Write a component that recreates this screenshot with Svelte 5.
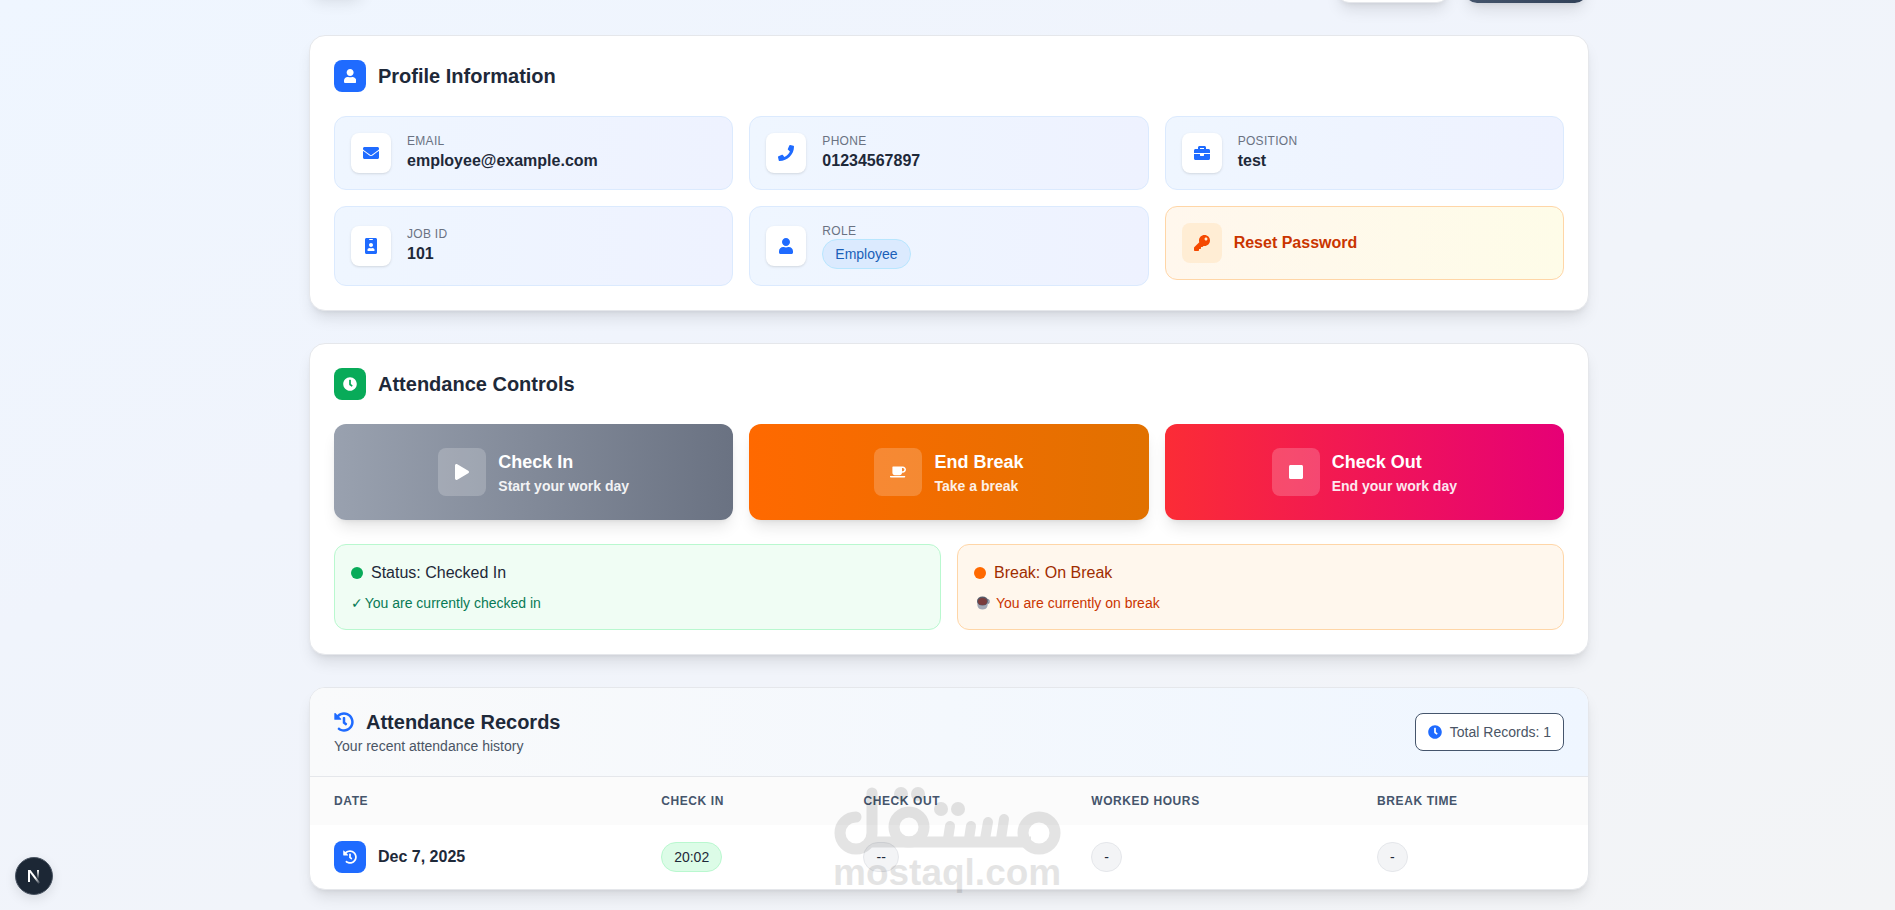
<script>
  const icons = {
    user: ['0 0 448 512', 'M224 256c70.7 0 128-57.3 128-128S294.7 0 224 0 96 57.3 96 128s57.3 128 128 128zm89.6 32h-16.7c-22.2 10.2-46.9 16-72.9 16s-50.6-5.8-72.9-16h-16.7C60.2 288 0 348.2 0 422.4V464c0 26.5 21.5 48 48 48h352c26.5 0 48-21.5 48-48v-41.6c0-74.2-60.2-134.4-134.4-134.4z'],
    envelope: ['0 0 512 512', 'M502.3 190.8c3.9-3.1 9.7-.2 9.7 4.7V400c0 26.5-21.5 48-48 48H48c-26.5 0-48-21.5-48-48V195.6c0-5 5.7-7.8 9.7-4.7 22.4 17.4 52.1 39.5 154.1 113.6 21.1 15.4 56.7 47.8 92.2 47.6 35.7.3 72-32.8 92.3-47.6 102-74.1 131.6-96.3 154-113.7zM256 320c23.2.4 56.6-29.2 73.4-41.4 132.7-96.3 142.8-104.7 173.4-128.7 5.8-4.5 9.2-11.5 9.2-18.9v-19c0-26.5-21.5-48-48-48H48c-26.5 0-48 21.5-48 48v19c0 7.4 3.4 14.3 9.2 18.9 30.6 23.9 40.7 32.4 173.4 128.7 16.8 12.2 50.2 41.8 73.4 41.4z'],
    phone: ['0 0 512 512', 'M493.4 24.6l-104-24c-11.3-2.6-22.9 3.3-27.5 13.9l-48 112c-4.2 9.8-1.4 21.3 6.9 28l60.6 49.6c-36 76.7-98.9 140.5-177.2 177.2l-49.6-60.6c-6.8-8.3-18.2-11.1-28-6.9l-112 48C3.9 366.5-2 378.1.6 389.4l24 104C27.1 504.2 36.7 512 48 512c256.1 0 464-207.5 464-464 0-11.2-7.7-20.9-18.6-23.4z'],
    briefcase: ['0 0 512 512', 'M320 336c0 8.84-7.16 16-16 16h-96c-8.84 0-16-7.16-16-16v-48H0v144c0 25.6 22.4 48 48 48h416c25.6 0 48-22.4 48-48V288H320v48zm144-208h-80V80c0-25.6-22.4-48-48-48H176c-25.6 0-48 22.4-48 48v48H48c-25.6 0-48 22.4-48 48v80h512v-80c0-25.6-22.4-48-48-48zm-144 0H192V96h128v32z'],
    badge: ['0 0 384 512', 'M336 0H48C21.5 0 0 21.5 0 48v416c0 26.5 21.5 48 48 48h288c26.5 0 48-21.5 48-48V48c0-26.5-21.5-48-48-48zM144 32h96c8.8 0 16 7.2 16 16s-7.2 16-16 16h-96c-8.8 0-16-7.2-16-16s7.2-16 16-16zm48 128c35.3 0 64 28.7 64 64s-28.7 64-64 64-64-28.7-64-64 28.7-64 64-64zm112 236.8c0 10.6-10 19.2-22.4 19.2H102.4C90 416 80 407.4 80 396.8v-19.2c0-31.8 30.1-57.6 67.2-57.6h5c12.3 5.1 25.7 8 39.8 8s27.6-2.9 39.8-8h5c37.1 0 67.2 25.8 67.2 57.6v19.2z'],
    key: ['0 0 512 512', 'M512 176.001C512 273.203 433.202 352 336 352c-11.22 0-22.19-1.062-32.827-3.069l-24.012 27.014A23.999 23.999 0 0 1 261.223 384H224v40c0 13.255-10.745 24-24 24h-40v40c0 13.255-10.745 24-24 24H24c-13.255 0-24-10.745-24-24v-78.059c0-6.365 2.529-12.47 7.029-16.971l161.802-161.802C163.108 213.814 160 195.271 160 176 160 78.798 238.797.001 335.999 0 433.488-.001 512 78.511 512 176.001zM336 128c0 26.51 21.49 48 48 48s48-21.49 48-48-21.49-48-48-48-48 21.49-48 48z'],
    clock: ['0 0 512 512', 'M256,8C119,8,8,119,8,256S119,504,256,504,504,393,504,256,393,8,256,8Zm92.49,313h0l-20,25a16,16,0,0,1-22.49,2.5h0l-67-49.72a40,40,0,0,1-15-31.23V112a16,16,0,0,1,16-16h32a16,16,0,0,1,16,16V256l58,42.5A16,16,0,0,1,348.49,321Z'],
    play: ['0 0 448 512', 'M424.4 214.7L72.4 6.6C43.8-10.3 0 6.1 0 47.9V464c0 37.5 40.7 60.1 72.4 41.3l352-208c31.4-18.5 31.5-64.1 0-82.6z'],
    coffee: ['0 0 640 512', 'M192 384h192c53 0 96-43 96-96h32c70.6 0 128-57.4 128-128S582.6 32 512 32H120c-13.3 0-24 10.7-24 24v232c0 53 43 96 96 96zM512 96c35.3 0 64 28.7 64 64s-28.7 64-64 64h-32V96h32zm47.7 384H48.3c-47.6 0-61-64-36-64h583.3c25 0 11.8 64-35.9 64z'],
    stop: ['0 0 448 512', 'M400 32H48C21.5 32 0 53.5 0 80v352c0 26.5 21.5 48 48 48h352c26.5 0 48-21.5 48-48V80c0-26.5-21.5-48-48-48z'],
    history: ['0 0 512 512', 'M504 255.531c.253 136.64-111.18 248.372-247.82 248.468-59.015.042-113.223-20.53-155.822-54.911-11.077-8.94-11.905-25.541-1.839-35.607l11.267-11.267c8.609-8.609 22.353-9.551 31.891-1.984C173.062 425.135 212.781 440 256 440c101.705 0 184-82.311 184-184 0-101.705-82.311-184-184-184-48.814 0-93.149 18.969-126.068 49.932l50.754 50.754c10.08 10.08 2.941 27.314-11.313 27.314H24c-8.837 0-16-7.163-16-16V38.627c0-14.254 17.234-21.393 27.314-11.314l49.372 49.372C129.209 34.136 189.552 8 256 8c136.81 0 247.747 110.78 248 247.531zm-180.912 78.784l9.823-12.63c8.138-10.463 6.253-25.542-4.21-33.679L288 256.349V152c0-13.255-10.745-24-24-24h-16c-13.255 0-24 10.745-24 24v135.651l65.409 50.874c10.463 8.137 25.541 6.253 33.679-4.21z']
  };

  const profile = [
    { icon: 'envelope', label: 'EMAIL', value: 'employee@example.com' },
    { icon: 'phone', label: 'PHONE', value: '01234567897' },
    { icon: 'briefcase', label: 'POSITION', value: 'test' },
    { icon: 'badge', label: 'JOB ID', value: '101' },
    { icon: 'user', label: 'ROLE', value: 'Employee', pill: true }
  ];

  const actions = [
    { icon: 'play', title: 'Check In', note: 'Start your work day', tone: 'gray' },
    { icon: 'coffee', title: 'End Break', note: 'Take a break', tone: 'orange' },
    { icon: 'stop', title: 'Check Out', note: 'End your work day', tone: 'red' }
  ];

  const columns = ['DATE', 'CHECK IN', 'CHECK OUT', 'WORKED HOURS', 'BREAK TIME'];
  const records = [{ date: 'Dec 7, 2025', checkIn: '20:02', checkOut: '--', worked: '-', rest: '-' }];
</script>

{#snippet icon(name, size)}
  <svg class="icon" viewBox={icons[name][0]} height={size} width={name === 'coffee' ? size : undefined} fill="currentColor" aria-hidden="true">
    <path d={icons[name][1]} />
  </svg>
{/snippet}

<div class="page">
  <main>
    <div class="topbar" aria-hidden="true">
      <span class="top-mark"></span>
      <span class="top-light"></span>
      <span class="top-dark"></span>
    </div>

    <section class="card padded">
      <header class="card-head">
        <span class="chip blue">{@render icon('user', 14)}</span>
        <h2>Profile Information</h2>
      </header>
      <div class="three">
        {#each profile as item}
          <div class="tile">
            <span class="tile-icon">{@render icon(item.icon, 16)}</span>
            <div>
              <p class="label">{item.label}</p>
              {#if item.pill}
                <span class="pill sky">{item.value}</span>
              {:else}
                <p class="value">{item.value}</p>
              {/if}
            </div>
          </div>
        {/each}
        <button class="tile reset" type="button">
          <span class="tile-icon">{@render icon('key', 16)}</span>
          <span>Reset Password</span>
        </button>
      </div>
    </section>

    <section class="card padded">
      <header class="card-head">
        <span class="chip green">{@render icon('clock', 14)}</span>
        <h2>Attendance Controls</h2>
      </header>
      <div class="three">
        {#each actions as action}
          <button class="action {action.tone}" type="button">
            <span class="action-icon">{@render icon(action.icon, 16)}</span>
            <span class="action-text">
              <span class="action-title">{action.title}</span>
              <span class="action-note">{action.note}</span>
            </span>
          </button>
        {/each}
      </div>
      <div class="two">
        <div class="status in">
          <p class="state"><span class="dot"></span>Status: Checked In</p>
          <p class="detail with-tick"><span class="tick">✓</span><span>You are currently checked in</span></p>
        </div>
        <div class="status rest">
          <p class="state"><span class="dot"></span>Break: On Break</p>
          <p class="detail with-cup">
            <svg class="icon" width="14" height="14" viewBox="0 0 14 14" aria-hidden="true">
              <circle cx="11" cy="5.500" r="2" fill="none" stroke="#8d93a3" stroke-width="1.500" />
              <path d="M1 5 1.500 10C2 12.500 4 13.500 6.500 13.500S11 12.500 11.500 10L12 5Z" fill="#a3a8b5" />
              <ellipse cx="6.500" cy="5" rx="5.500" ry="4.500" fill="#555a68" />
              <ellipse cx="6.500" cy="5.500" rx="4.500" ry="3.500" fill="#7a3b3b" />
            </svg>
            <span>You are currently on break</span>
          </p>
        </div>
      </div>
    </section>

    <section class="card records">
      <header class="records-head">
        <div>
          <h2>{@render icon('history', 20)}Attendance Records</h2>
          <p class="sub">Your recent attendance history</p>
        </div>
        <div class="total">{@render icon('clock', 14)}<span>Total Records: 1</span></div>
      </header>
      <table>
        <thead>
          <tr>{#each columns as column}<th scope="col">{column}</th>{/each}</tr>
        </thead>
        <tbody>
          {#each records as row}
            <tr>
              <td><div class="date"><span class="chip blue">{@render icon('history', 14)}</span><span>{row.date}</span></div></td>
              <td><span class="pill mint">{row.checkIn}</span></td>
              <td><span class="pill plain">{row.checkOut}</span></td>
              <td><span class="pill plain">{row.worked}</span></td>
              <td><span class="pill plain">{row.rest}</span></td>
            </tr>
          {/each}
        </tbody>
      </table>

      <svg class="watermark" width="232" height="112" viewBox="0 0 232 112" role="img" aria-label="mostaql.com">
        <g opacity="0.1" fill="#000" stroke-linecap="round">
          <g fill="none" stroke="#000" stroke-width="11">
            <path d="M25 34A16 16 0 1 0 41 50V10" />
            <path d="M41 59H200" stroke-linecap="butt" />
            <circle cx="78" cy="44" r="15" />
            <circle cx="208" cy="50" r="16" />
            <g stroke-width="10">
              <path d="M119 43l-2 13M140 43l-2 13M157 39l-3 17M173 36l-3 20" />
            </g>
          </g>
          <circle cx="70" cy="11" r="7" /><circle cx="87" cy="11" r="7" />
          <circle cx="110" cy="26" r="7" /><circle cx="127" cy="26" r="7" />
          <text x="2" y="102">mostaql.com</text>
        </g>
      </svg>
    </section>
  </main>

  <button class="dev" type="button" aria-label="N">
    <svg width="38" height="38" viewBox="0 0 38 38" aria-hidden="true">
      <defs>
        <linearGradient id="stem" x1="0" y1="0" x2="0" y2="1">
          <stop offset="0" stop-color="#fff" /><stop offset="1" stop-color="#fff" stop-opacity="0" />
        </linearGradient>
        <linearGradient id="slash" gradientUnits="userSpaceOnUse" x1="19" y1="19" x2="25" y2="27">
          <stop offset="0.2" stop-color="#fff" /><stop offset="1" stop-color="#fff" stop-opacity="0" />
        </linearGradient>
      </defs>
      <circle cx="19" cy="19" r="18.500" fill="#1c2735" stroke="#4b5563" />
      <rect x="13" y="13" width="2" height="12" fill="#fff" />
      <path d="M13 13H15.500L25 25.500 23.500 27Z" fill="url(#slash)" />
      <rect x="22" y="13" width="2" height="9" fill="url(#stem)" />
    </svg>
  </button>
</div>

<style>
  :global(body) { margin: 0; }
  .page {
    box-sizing: border-box;
    min-height: 100vh;
    overflow: hidden;
    padding: 0 20px 20px 23px;
    background: linear-gradient(to bottom right, #eff6ff, #f0f4fc 35%, #f3f4f6);
    font-family: "Liberation Sans", Arial, sans-serif;
    font-size: 16px;
    line-height: 24px;
    color: #1e2939;
  }
  .page * { box-sizing: border-box; }
  main { max-width: 1280px; margin: 0 auto; display: flex; flex-direction: column; gap: 32px; }
  p, h2 { margin: 0; }
  button { font: inherit; border: 0; cursor: pointer; }
  .icon { display: block; flex: none; }

  .topbar { display: flex; gap: 16px; height: 48px; margin-top: -45px; padding-right: 2px; }
  .topbar span { border-radius: 12px; box-shadow: 0 10px 15px -3px #0000001a, 0 4px 6px -4px #0000001a; }
  .top-mark { width: 56px; margin: 0 auto 8px 0; background: #1f6bff; }
  .top-light { width: 112px; background: #fff; border: 1px solid #e5e7eb; }
  .top-dark { width: 122px; background: linear-gradient(to right, #45556c, #314158); }

  .card {
    position: relative;
    background: #fff;
    border: 1px solid #e5e7eb;
    border-radius: 16px;
    box-shadow: 0 10px 15px -3px #0000001a, 0 4px 6px -4px #0000001a;
  }
  .padded { display: flex; flex-direction: column; gap: 24px; padding: 24px; }
  .card-head { display: flex; align-items: center; gap: 12px; }
  h2 { font-size: 20px; line-height: 28px; font-weight: 700; }
  .chip { display: flex; align-items: center; justify-content: center; width: 32px; height: 32px; border-radius: 8px; color: #fff; }
  .blue { background: #1f6bff; }
  .green { background: #08ab59; }

  .three { display: grid; grid-template-columns: repeat(3, 1fr); gap: 16px; }
  .two { display: grid; grid-template-columns: repeat(2, 1fr); gap: 16px; }

  .tile {
    display: flex;
    align-items: center;
    gap: 16px;
    padding: 16px;
    border: 1px solid #dbeafe;
    border-radius: 12px;
    background: linear-gradient(to right, #eff6ff, #eef2ff);
  }
  .tile-icon {
    display: flex;
    align-items: center;
    justify-content: center;
    width: 40px;
    height: 40px;
    border-radius: 8px;
    background: #fff;
    color: #1f6bff;
    box-shadow: 0 1px 3px #0000001a, 0 1px 2px -1px #0000001a;
  }
  .label { font-size: 12px; line-height: 16px; letter-spacing: 0.025em; color: #6a7282; }
  .value { font-weight: 700; }
  .reset {
    align-self: start;
    gap: 12px;
    border: 1px solid #ffd6a7;
    background: linear-gradient(to right, #fff7ed, #fefce8);
    color: #ca3500;
    font-weight: 700;
  }
  .reset .tile-icon { background: #ffedd4; color: #f54900; box-shadow: none; }

  .pill {
    display: block;
    width: fit-content;
    padding: 4px 12px;
    border: 1px solid;
    border-radius: 15px;
    font-size: 14px;
    line-height: 20px;
  }
  .sky { background: #dbeafe; border-color: #b8e6fe; color: #1a5fb8; }
  .mint { background: #dcfce7; border-color: #b9f8cf; }
  .plain { background: #f3f4f6; border-color: #e5e7eb; }

  .action {
    display: flex;
    align-items: center;
    justify-content: center;
    gap: 12px;
    padding: 24px;
    border-radius: 12px;
    color: #fff;
    font-weight: 700;
    text-align: left;
    box-shadow: 0 10px 15px -3px #0000001a, 0 4px 6px -4px #0000001a;
  }
  .action-icon { display: flex; align-items: center; justify-content: center; width: 48px; height: 48px; border-radius: 8px; background: #ffffff33; }
  .action-text { display: flex; flex-direction: column; }
  .action-title { font-size: 18px; line-height: 28px; }
  .action-note { font-size: 14px; line-height: 20px; opacity: 0.9; }
  .gray { background: linear-gradient(to right, #99a1af, #6a7282); }
  .orange { background: linear-gradient(to right, #ff6900, #e17100); }
  .red { background: linear-gradient(to right, #fb2c36, #e60076); }

  .status { display: flex; flex-direction: column; gap: 8px; padding: 16px; border: 1px solid; border-radius: 12px; }
  .state { display: flex; align-items: center; gap: 8px; }
  .dot { width: 12px; height: 12px; border-radius: 50%; }
  .detail { display: flex; align-items: center; height: 20px; font-size: 14px; line-height: 20px; }
  .with-tick { gap: 2px; }
  .tick { font-family: "DejaVu Sans", sans-serif; }
  .with-cup { gap: 6px; padding-left: 2px; }
  .in { background: #f0fdf4; border-color: #b9f8cf; }
  .in .dot { background: #08ab59; }
  .in .detail { color: #087a55; }
  .rest { background: #fff7ed; border-color: #ffd6a7; color: #9f2d00; }
  .rest .dot { background: #ff6900; }
  .rest .detail { color: #ca3500; }

  .records-head {
    display: flex;
    align-items: center;
    justify-content: space-between;
    padding: 20px 24px;
    border-bottom: 1px solid #e5e7eb;
    border-radius: 15px 15px 0 0;
    background: linear-gradient(to right, #f9fafb, #eff6ff);
  }
  .records-head h2 { display: flex; align-items: center; gap: 12px; }
  .records-head .icon { color: #1f6bff; }
  .sub { font-size: 14px; line-height: 20px; color: #4a5565; }
  .total {
    display: flex;
    align-items: center;
    gap: 8px;
    padding: 8px 12px;
    border: 1px solid #45556c;
    border-radius: 8px;
    background: #fff;
    font-size: 14px;
    line-height: 20px;
    color: #4a5565;
  }

  table { width: 100%; border-collapse: collapse; }
  th {
    padding: 16px 24px;
    background: #fbfbfb;
    font-size: 12px;
    line-height: 16px;
    font-weight: 700;
    letter-spacing: 0.05em;
    text-align: left;
    color: #45556c;
  }
  td { padding: 16px 24px; }
  .date { display: flex; align-items: center; gap: 12px; font-weight: 700; }

  .watermark { position: absolute; left: 50%; bottom: -6px; margin-left: -118px; pointer-events: none; }
  .watermark text { font-size: 37px; font-weight: 700; }

  .dev { position: absolute; left: 15px; bottom: 15px; padding: 0; background: none; border-radius: 50%; box-shadow: 0 4px 12px #0000001a; }
  .dev svg { display: block; }
</style>
